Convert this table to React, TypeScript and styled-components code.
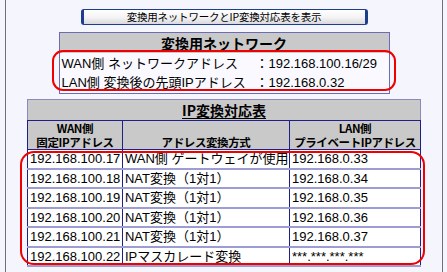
import styled, { createGlobalStyle } from 'styled-components';

const GlobalStyle = createGlobalStyle`
  body {
    margin: 0;
    background: #f5f5fd;
    font-family: "Liberation Sans", "Noto Sans CJK JP", sans-serif;
    color: #000;
  }
`;

const Frame = styled.div`
  position: relative;
  box-sizing: border-box;
  margin-left: 5px;
  width: 438px;
  height: 272px;
  overflow: hidden;
  border-left: 1px solid #6f6f78;
  border-right: 1px solid #6f6f78;
  padding-top: 9px;
  display: flex;
  flex-direction: column;
  align-items: center;
`;

const ShowButton = styled.button`
  box-sizing: border-box;
  width: 287px;
  height: 16px;
  padding: 0;
  border: 1px solid #1e3d8f;
  border-left-width: 3px;
  border-right-width: 3px;
  border-radius: 3px;
  background: linear-gradient(#ffffff 0%, #f3f3f3 55%, #d8d8de 100%);
  font-family: "Noto Sans CJK JP", sans-serif;
  font-size: 10.5px;
  line-height: 14px;
  color: #000;
  letter-spacing: -0.2px;
`;

const NetBox = styled.div`
  box-sizing: border-box;
  width: 331px;
  margin-top: 7px;
  border: 1px solid #6c6cb4;
  background: #f9f9ff;
`;

const Caption = styled.div<{ $h: number }>`
  height: ${p => p.$h}px;
  background: #c9c9c9;
  display: flex;
  align-items: center;
  justify-content: center;
  font-family: "Noto Sans CJK JP", sans-serif;
  font-weight: bold;
  font-size: 14px;
  line-height: ${p => p.$h}px;
  text-decoration: underline;
  text-underline-offset: 2px;
`;

const NetRows = styled.div`
  display: grid;
  grid-template-columns: 194px 13px 1fr;
  align-items: center;
  padding: 1px 2px 1px 2px;
  font-size: 13px;
  line-height: 19px;
  white-space: nowrap;
`;

const Colon = styled.span`
  text-align: center;
`;

const IpTable = styled.table`
  margin-top: 5px;
  width: 393px;
  border-collapse: collapse;
  border: 1px solid #9a9ad2;
  table-layout: fixed;
  font-size: 13px;
`;

const Col = styled.col<{ $w: number }>`
  width: ${p => p.$w}px;
`;

const TitleCell = styled.th`
  height: 20px;
  padding: 0;
  border: 1px solid #8a8ac0;
  border-bottom: 1px solid #1f1f8c;
  background: #c9c9c9;
`;

const HeadCell = styled.th`
  height: 28px;
  padding: 0;
  border: 1px solid #1f1f8c;
  background: #c9c9c9;
  font-family: "Noto Sans CJK JP", sans-serif;
  font-weight: bold;
  font-size: 11.5px;
  line-height: 14px;
  letter-spacing: -0.4px;
  white-space: nowrap;
  overflow: hidden;
  vertical-align: bottom;
`;

const Cell = styled.td`
  height: 17.5px;
  padding: 0 0 0 2px;
  border-left: 1px solid #1f1f8c;
  border-right: 1px solid #1f1f8c;
  border-bottom: 2px solid #9d9dd6;
  background: #ffffff;
  line-height: 17px;
  white-space: nowrap;
  overflow: hidden;
`;

const RedRing = styled.div<{ $x: number; $y: number; $w: number; $h: number; $r: number }>`
  position: absolute;
  box-sizing: border-box;
  left: ${p => p.$x}px;
  top: ${p => p.$y}px;
  width: ${p => p.$w}px;
  height: ${p => p.$h}px;
  border: 2px solid #f00000;
  border-radius: ${p => p.$r}px;
  pointer-events: none;
`;

const rows = [
  ['192.168.100.17', 'WAN側 ゲートウェイが使用', '192.168.0.33'],
  ['192.168.100.18', 'NAT変換（1対1）', '192.168.0.34'],
  ['192.168.100.19', 'NAT変換（1対1）', '192.168.0.35'],
  ['192.168.100.20', 'NAT変換（1対1）', '192.168.0.36'],
  ['192.168.100.21', 'NAT変換（1対1）', '192.168.0.37'],
  ['192.168.100.22', 'IPマスカレード変換', '***.***.***.***'],
];

export default function App() {
  return (
    <>
      <GlobalStyle />
      <Frame>
        <ShowButton>変換用ネットワークとIP変換対応表を表示</ShowButton>

        <NetBox>
          <Caption $h={20}>変換用ネットワーク</Caption>
          <NetRows>
            <span>WAN側 ネットワークアドレス</span>
            <Colon>：</Colon>
            <span>192.168.100.16/29</span>
            <span>LAN側 変換後の先頭IPアドレス</span>
            <Colon>：</Colon>
            <span>192.168.0.32</span>
          </NetRows>
        </NetBox>

        <IpTable>
          <colgroup>
            <Col $w={95} />
            <Col $w={167} />
            <Col $w={131} />
          </colgroup>
          <thead>
            <tr>
              <TitleCell colSpan={3}>
                <Caption $h={19}>IP変換対応表</Caption>
              </TitleCell>
            </tr>
            <tr>
              <HeadCell>WAN側<br />固定IPアドレス</HeadCell>
              <HeadCell>アドレス変換方式</HeadCell>
              <HeadCell>LAN側<br />プライベートIPアドレス</HeadCell>
            </tr>
          </thead>
          <tbody>
            {rows.map(r => (
              <tr key={r[0]}>
                <Cell>{r[0]}</Cell>
                <Cell>{r[1]}</Cell>
                <Cell>{r[2]}</Cell>
              </tr>
            ))}
          </tbody>
        </IpTable>

        <RedRing $x={46} $y={50} $w={344} $h={41} $r={11} />
        <RedRing $x={14} $y={151} $w={405} $h={114} $r={14} />
      </Frame>
    </>
  );
}
